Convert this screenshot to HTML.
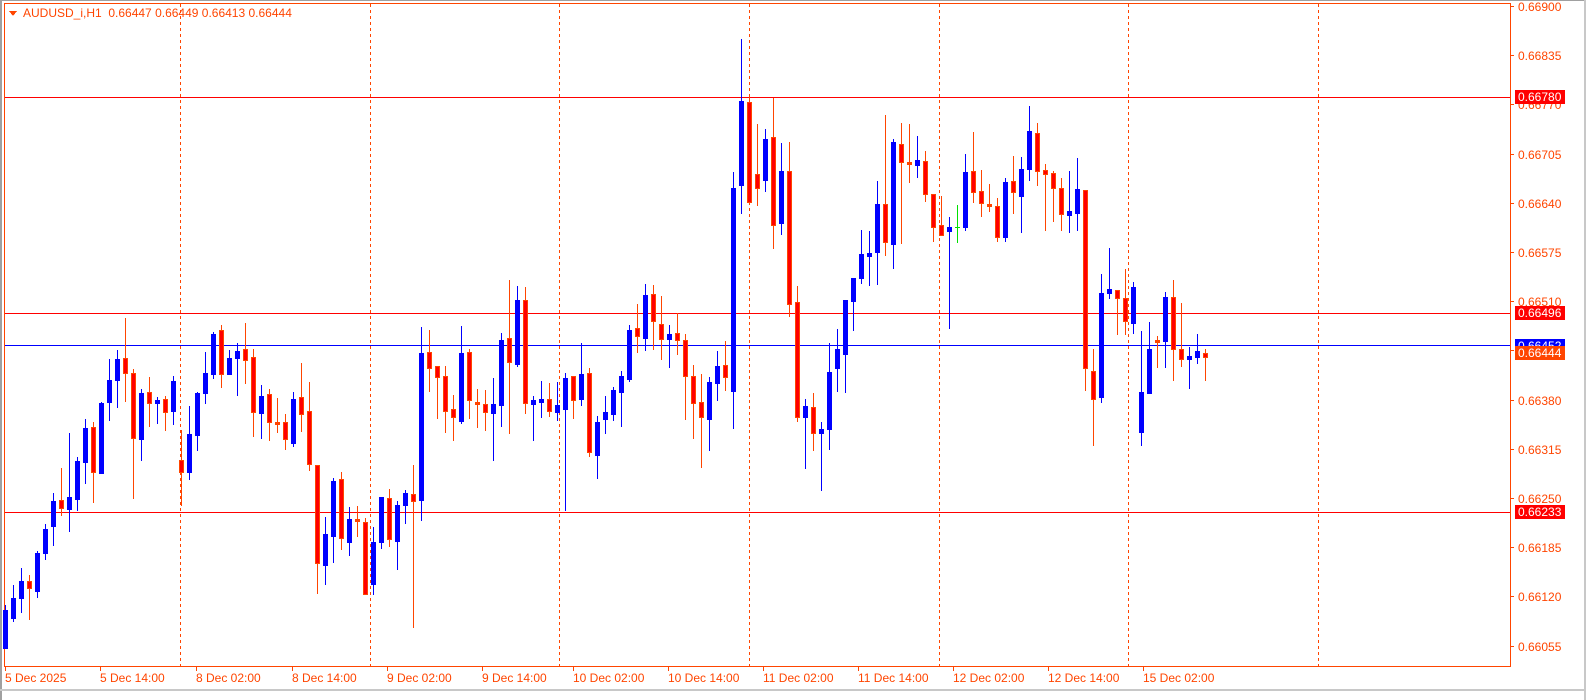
<!DOCTYPE html>
<html><head><meta charset="utf-8">
<style>
html,body{margin:0;padding:0;background:#fff;}
body{width:1586px;height:700px;overflow:hidden;position:relative;font-family:"Liberation Sans",sans-serif;}
svg{position:absolute;left:0;top:0;}
text{font-family:"Liberation Sans",sans-serif;font-size:12px;}
</style></head><body>
<svg id="s" width="1586" height="700" xmlns="http://www.w3.org/2000/svg" shape-rendering="crispEdges"></svg>
<script>
var D=[
"b 605 648 610 648","b 585 621 598 618","b 568 612 581 598","r 575 619 581 588","b 551 597 553 591","b 524 559 529 553","b 493 545 501 526","r 468 515 500 508","b 433 531 497 509","b 457 510 461 499",
"b 419 483 428 462","r 422 502 427 472","b 402 473 403 473","b 359 420 380 402","b 350 407 359 380","r 318 401 358 373","r 369 498 373 438","b 389 460 393 439","r 377 426 392 403","b 397 423 400 403",
"r 396 430 399 412","b 376 424 381 411","r 430 505 460 472","b 406 479 434 472","b 392 450 393 435","b 352 403 373 393","b 332 378 334 374","r 325 387 330 374","b 350 374 358 374","b 343 395 351 358",
"r 323 383 349 360","r 349 436 357 412","b 385 438 396 413","r 389 440 394 422","r 398 432 422 424","r 414 449 422 439","b 392 446 399 443","r 363 431 397 414","r 382 470 411 464","r 465 593 465 563",
"b 517 584 534 565","b 478 562 481 536","r 472 549 479 538","b 507 555 519 542","r 506 536 519 521","r 518 594 522 594","b 527 594 542 584","b 497 548 497 542","r 489 546 498 539","b 501 569 505 541",
"b 490 523 493 505","r 465 627 494 501","b 327 520 353 500","r 330 391 352 368","r 366 418 366 377","r 366 432 376 411","r 395 440 409 417","b 326 423 353 421","r 349 418 352 400","r 389 427 402 404",
"r 390 430 404 412","b 378 460 404 413","b 333 426 340 405","r 280 433 338 362","b 286 366 300 364","r 287 413 300 403","b 396 440 400 404","b 381 417 399 402","r 383 416 399 411","b 382 420 405 412",
"b 373 510 378 409","r 376 418 376 400","b 343 405 374 399","r 368 456 373 452","b 416 478 422 455","b 396 433 412 419","b 387 420 390 414","b 371 426 376 392","b 325 381 330 379","r 304 352 328 336",
"b 284 350 295 338","r 285 349 294 321","r 296 359 324 339","b 325 367 334 339","r 313 354 333 340","r 334 419 340 376","r 365 438 376 403","r 374 467 402 417","b 377 450 382 419","b 351 400 366 383",
"r 341 390 365 377","b 172 428 188 391","b 39 213 101 185","r 96 202 102 202","r 124 205 174 188","b 129 191 139 180","r 98 248 137 225","b 143 234 171 223","r 142 316 171 304","r 286 421 302 417",
"b 399 468 406 417","r 393 450 407 433","b 422 490 429 433","b 343 449 372 429","b 329 391 349 368","b 300 392 300 354","b 278 330 278 301","b 230 283 254 278","b 231 285 253 256","b 181 284 204 252",
"r 115 255 204 242","b 139 268 142 244","r 123 243 144 162","r 124 182 162 164","b 136 177 160 165","r 151 201 161 194","r 194 241 194 227","r 196 235 225 235","b 217 328 227 231","g 205 242 227 228",
"b 154 230 172 227","r 132 202 171 192","r 170 216 191 203","r 184 211 204 206","r 198 241 206 237","b 178 241 182 237","r 156 213 181 192","b 157 232 169 196","b 106 180 131 169","r 123 185 133 171",
"r 164 230 170 174","r 171 221 173 188","r 178 230 188 214","b 171 232 211 215","b 158 230 189 213","r 190 390 190 368","r 349 445 371 399","b 274 402 293 397","b 248 298 289 293","r 290 334 290 298",
"r 269 334 298 321","b 282 333 287 323","b 331 445 392 432","b 322 393 349 393","r 336 367 340 342","b 292 367 297 341","r 280 380 297 349","r 303 366 349 359","b 347 388 356 359","b 334 363 351 357",
"r 349 380 353 357"];
var O="#ff4500",h='';
function R(x,y,w,hh,c){h+='<rect x="'+x+'" y="'+y+'" width="'+w+'" height="'+hh+'" fill="'+c+'"/>';}
function T(x,y,t,c,a){h+='<text x="'+x+'" y="'+y+'" fill="'+c+'"'+(a?' text-anchor="'+a+'"':'')+'>'+t+'</text>';}
// frame
R(0,0,1586,1,"#a0a0a0");R(0,0,2,700,"#a0a0a0");R(0,689,1586,2,"#c8c8c8");R(1584,0,2,700,"#c8c8c8");
R(4,3,1,664,O);R(4,666,1507,1,O);R(1510,3,1,664,O);R(4,3,1507,1,O);
// vertical dashed
[180,370,559,749,939,1128,1318].forEach(function(x){h+='<line x1="'+(x+0.5)+'" y1="4" x2="'+(x+0.5)+'" y2="666" stroke="'+O+'" stroke-width="1" stroke-dasharray="3,3"/>';});
// horizontal lines
R(5,97,1505,1,"#ff0000");R(5,313,1505,1,"#ff0000");R(5,512,1505,1,"#ff0000");R(5,345,1505,1,"#0000ff");
// candles
D.forEach(function(s,i){var p=s.split(' '),t=p[0],wt=+p[1],wb=+p[2],bt=+p[3],bb=+p[4],cx=5+8*i;
 var bh=Math.max(bb-bt,1);
 if(t=='b'){R(cx,wt,1,wb-wt+1,"#0000ff");R(cx-2,bt,5,bh+1,"#0000ff");}
 else if(t=='g'){R(cx,wt,1,wb-wt+1,"#00e000");R(cx-2,bt,5,1,"#00e000");}
 else{R(cx,wt,1,wb-wt+1,O);R(cx-2,bt,5,bh+1,O);if(bh>=3)R(cx-1,bt+1,3,bh-1,"#ff0000");}
});
// price axis
var P=["0.66900","0.66835","0.66770","0.66705","0.66640","0.66575","0.66510","0.66445","0.66380","0.66315","0.66250","0.66185","0.66120","0.66055"];
P.forEach(function(t,k){var y=Math.round(6+k*49.2);R(1510,y,4,1,O);T(1518,y+5,t,O);});
function tag(y,t,c){R(1515,y,50,14,c);T(1518,y+11,t,"#fff");}
tag(90,"0.66780","#ff0000");tag(306,"0.66496","#ff0000");
R(1515,339,50,8,"#0000ff");T(1518,350,"0.66452","#fff");
tag(346,"0.66444","#ff4500");tag(505,"0.66233","#ff0000");
// time axis
[[5,"5 Dec 2025"],[100,"5 Dec 14:00"],[196,"8 Dec 02:00"],[292,"8 Dec 14:00"],[387,"9 Dec 02:00"],[482,"9 Dec 14:00"],[573,"10 Dec 02:00"],[668,"10 Dec 14:00"],[763,"11 Dec 02:00"],[858,"11 Dec 14:00"],[953,"12 Dec 02:00"],[1048,"12 Dec 14:00"],[1143,"15 Dec 02:00"]].forEach(function(a){R(a[0],666,1,5,O);T(a[0],682,a[1],O);});
// header
h+='<polygon points="9,11 17,11 13,16" fill="'+O+'"/>';
T(23,17,"AUDUSD_i,H1&#160;&#160;0.66447 0.66449 0.66413 0.66444",O);
document.getElementById('s').innerHTML=h;
</script>
</body></html>
